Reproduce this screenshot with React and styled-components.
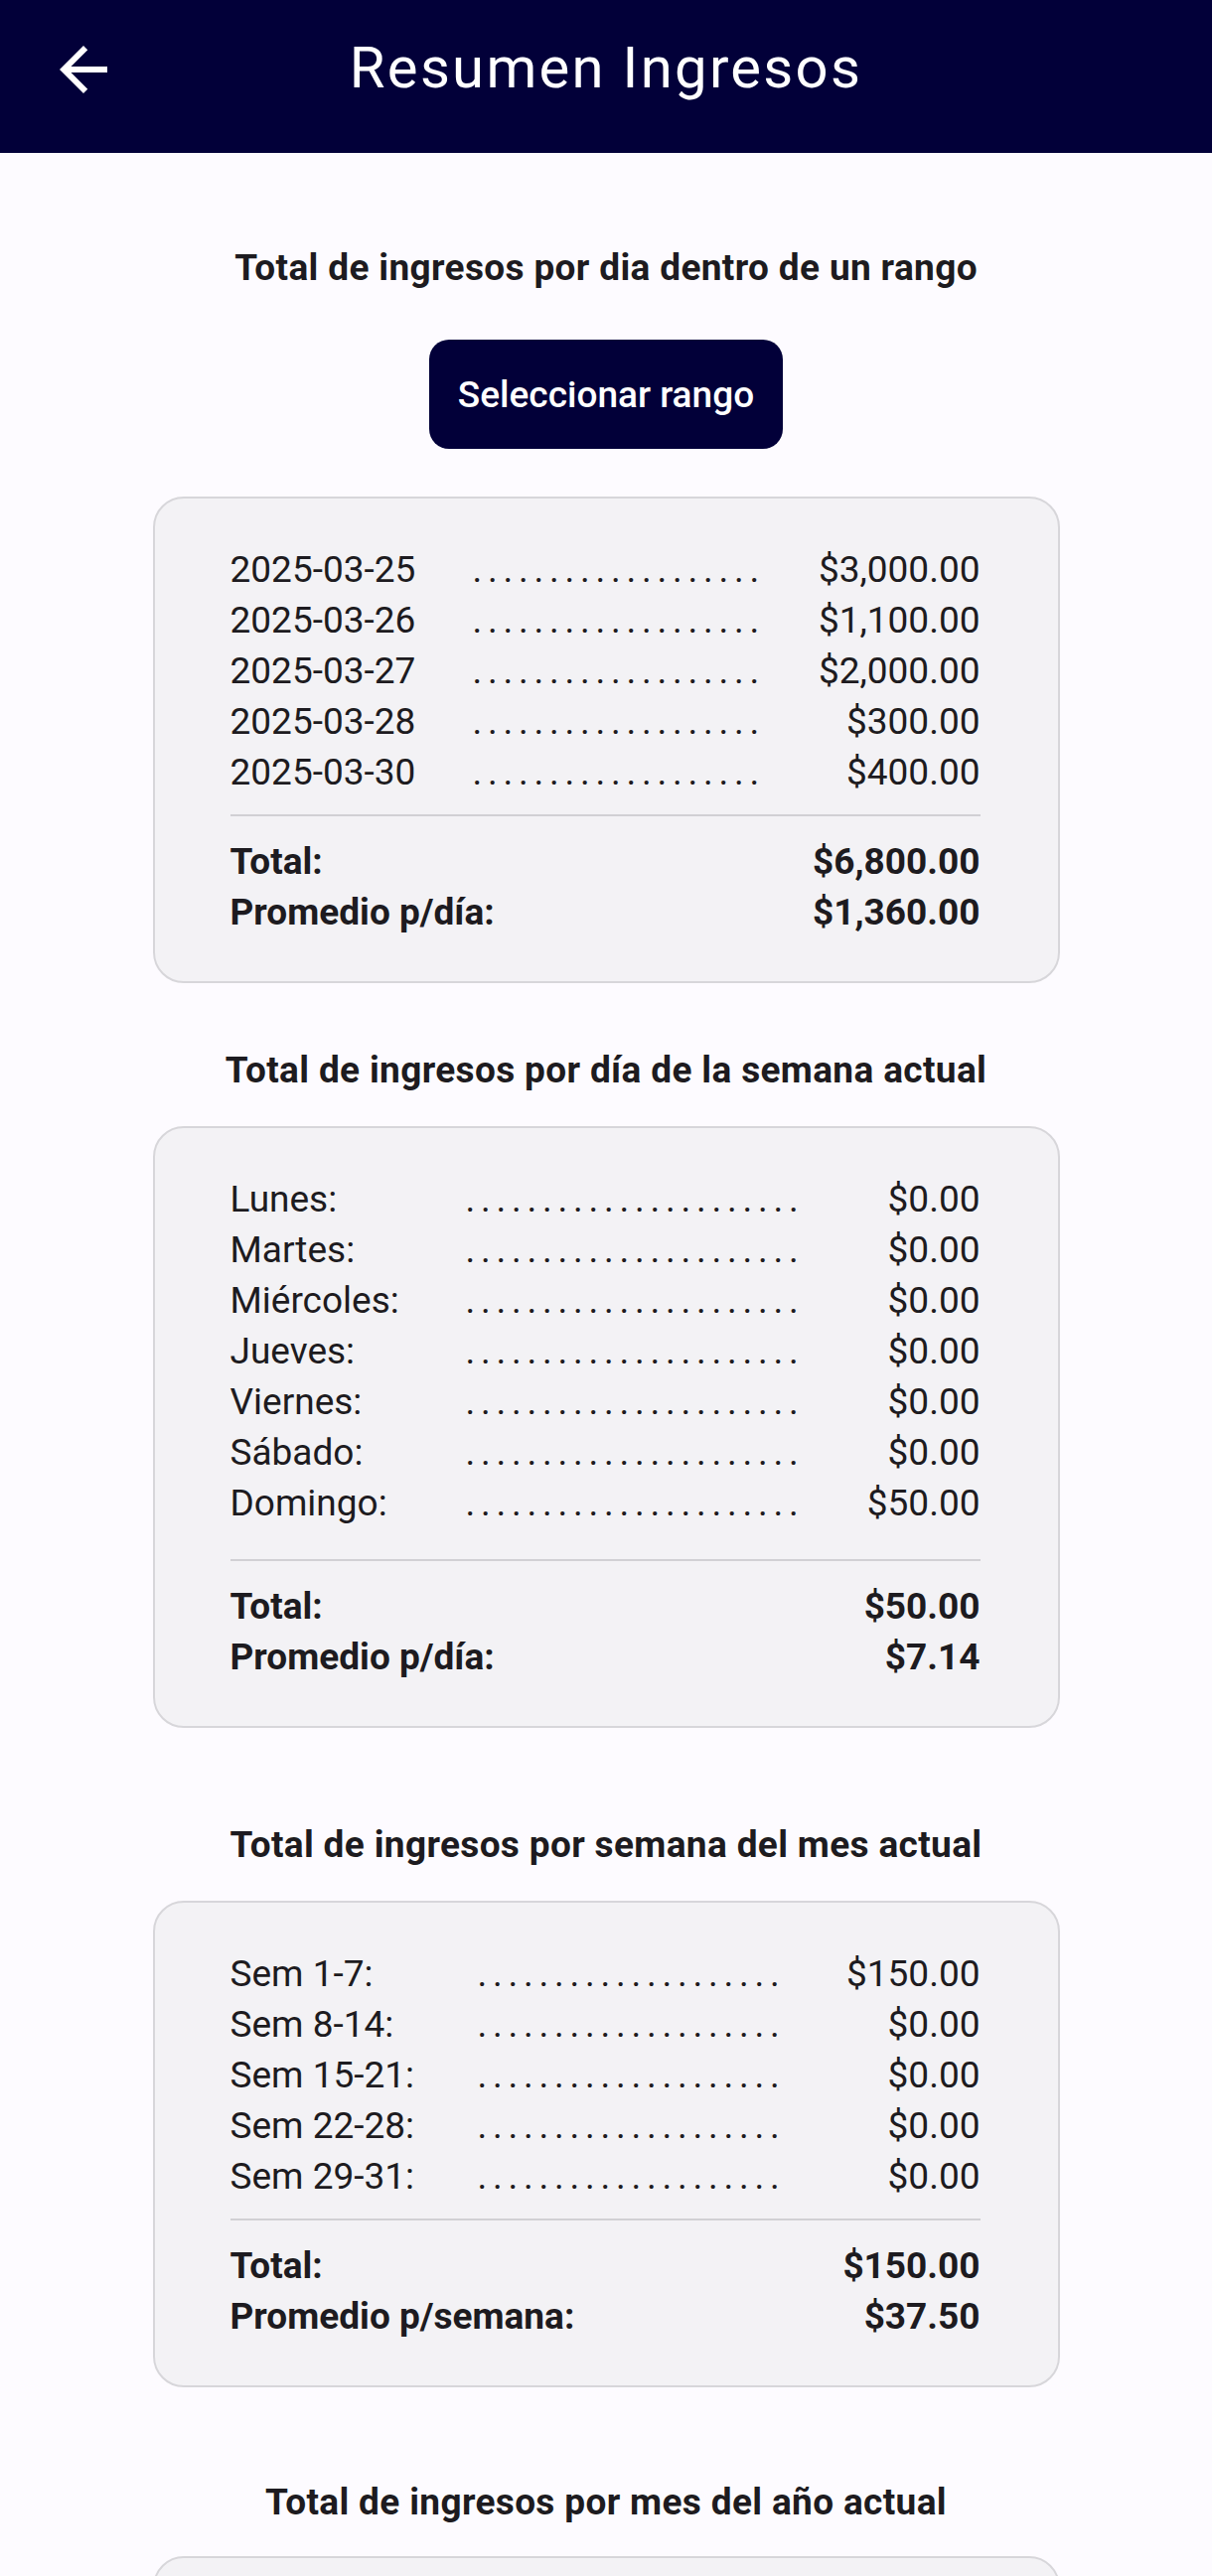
import React from "react";
import styled, { createGlobalStyle } from "styled-components";

const GlobalStyle = createGlobalStyle`
  html, body {
    margin: 0;
    padding: 0;
    background: #fdfbff;
  }
  body {
    font-family: Roboto, "Noto Sans", "Liberation Sans", sans-serif;
    color: #1d1b20;
  }
  * { box-sizing: border-box; }
`;

const Screen = styled.div`
  width: 100%;
  height: 100vh;
  overflow: hidden;
  background: #fdfbff;
`;

const Header = styled.header`
  height: 154px;
  background: #020039;
  display: grid;
  grid-template-columns: 168px 1fr 168px;
  align-items: start;
`;

const BackButton = styled.button`
  margin: 34px 0 0 48px;
  width: 72px;
  height: 72px;
  padding: 0;
  border: 0;
  background: none;
  color: #ffffff;
  display: flex;
  cursor: pointer;
`;

const Title = styled.h1`
  margin: 0;
  padding-top: 34px;
  font-family: Roboto, sans-serif;
  font-size: 58px;
  line-height: 68px;
  font-weight: 400;
  letter-spacing: 2.3px;
  color: #ffffff;
  text-align: center;
  white-space: nowrap;
`;

const Main = styled.main`
  display: flex;
  flex-direction: column;
  align-items: center;
  padding-top: 94px;
`;

const SectionTitle = styled.h2`
  margin: ${(p) => p.$mt || 0}px 0 0;
  font-family: Roboto, sans-serif;
  font-size: 37px;
  line-height: 44px;
  font-weight: 700;
  letter-spacing: 0.35px;
  text-align: center;
  color: #1d1b20;
  white-space: nowrap;
`;

const RangeButton = styled.button`
  margin-top: 50px;
  width: 356px;
  height: 110px;
  border: 0;
  border-radius: 20px;
  background: #020039;
  color: #ffffff;
  font-family: Roboto, sans-serif;
  font-size: 37px;
  font-weight: 500;
  cursor: pointer;
`;

const Card = styled.section`
  width: 913px;
  min-height: ${(p) => p.$minHeight || 0}px;
  margin-top: ${(p) => p.$mt}px;
  background: #f3f2f5;
  border: 2px solid #d7d6da;
  border-radius: 31px;
  padding: 46px 78px 44px 76px;
`;

const Row = styled.div`
  display: grid;
  grid-template-columns: ${(p) => p.$label}px auto 1fr;
  height: 51px;
  line-height: 51px;
  font-size: 37px;
  font-weight: 400;
  color: #1d1b20;
  white-space: nowrap;
`;

const Dots = styled.span`
  letter-spacing: 5.75px;
`;

const Value = styled.span`
  text-align: right;
`;

const Divider = styled.hr`
  margin: ${(p) => p.$mt}px 0 20px;
  border: 0;
  height: 2px;
  background: #d1d0d4;
`;

const TotalRow = styled.div`
  display: flex;
  justify-content: space-between;
  height: 51px;
  line-height: 51px;
  font-size: 37px;
  font-weight: 700;
  color: #1d1b20;
  white-space: nowrap;
`;

const ArrowBack = () => (
  <svg width="72" height="72" viewBox="0 0 24 24" fill="currentColor" aria-hidden="true">
    <path d="M20 11H7.83l5.59-5.59L12 4l-8 8 8 8 1.41-1.41L7.83 13H20v-2z" />
  </svg>
);

const SummaryCard = ({ rows, label, dots, dividerGap, totals, mt }) => (
  <Card $mt={mt}>
    {rows.map(([name, value]) => (
      <Row key={name} $label={label}>
        <span>{name}</span>
        <Dots>{".".repeat(dots)}</Dots>
        <Value>{value}</Value>
      </Row>
    ))}
    <Divider $mt={dividerGap} />
    {totals.map(([name, value]) => (
      <TotalRow key={name}>
        <span>{name}</span>
        <span>{value}</span>
      </TotalRow>
    ))}
  </Card>
);

const rangeRows = [
  ["2025-03-25", "$3,000.00"],
  ["2025-03-26", "$1,100.00"],
  ["2025-03-27", "$2,000.00"],
  ["2025-03-28", "$300.00"],
  ["2025-03-30", "$400.00"],
];

const weekDayRows = [
  ["Lunes:", "$0.00"],
  ["Martes:", "$0.00"],
  ["Miércoles:", "$0.00"],
  ["Jueves:", "$0.00"],
  ["Viernes:", "$0.00"],
  ["Sábado:", "$0.00"],
  ["Domingo:", "$50.00"],
];

const monthWeekRows = [
  ["Sem 1-7:", "$150.00"],
  ["Sem 8-14:", "$0.00"],
  ["Sem 15-21:", "$0.00"],
  ["Sem 22-28:", "$0.00"],
  ["Sem 29-31:", "$0.00"],
];

export default function App() {
  return (
    <>
      <GlobalStyle />
      <Screen>
        <Header>
          <BackButton aria-label="Volver">
            <ArrowBack />
          </BackButton>
          <Title>Resumen Ingresos</Title>
          <span />
        </Header>
        <Main>
          <SectionTitle>Total de ingresos por dia dentro de un rango</SectionTitle>
          <RangeButton>Seleccionar rango</RangeButton>
          <SummaryCard
            mt={48}
            rows={rangeRows}
            label={244}
            dots={19}
            dividerGap={17}
            totals={[
              ["Total:", "$6,800.00"],
              ["Promedio p/día:", "$1,360.00"],
            ]}
          />

          <SectionTitle $mt={66}>Total de ingresos por día de la semana actual</SectionTitle>
          <SummaryCard
            mt={34}
            rows={weekDayRows}
            label={237}
            dots={22}
            dividerGap={31}
            totals={[
              ["Total:", "$50.00"],
              ["Promedio p/día:", "$7.14"],
            ]}
          />

          <SectionTitle $mt={96}>Total de ingresos por semana del mes actual</SectionTitle>
          <SummaryCard
            mt={34}
            rows={monthWeekRows}
            label={249}
            dots={20}
            dividerGap={17}
            totals={[
              ["Total:", "$150.00"],
              ["Promedio p/semana:", "$37.50"],
            ]}
          />

          <SectionTitle $mt={94}>Total de ingresos por mes del año actual</SectionTitle>
          <Card $mt={32} $minHeight={400} aria-label="Ingresos por mes" />
        </Main>
      </Screen>
    </>
  );
}
